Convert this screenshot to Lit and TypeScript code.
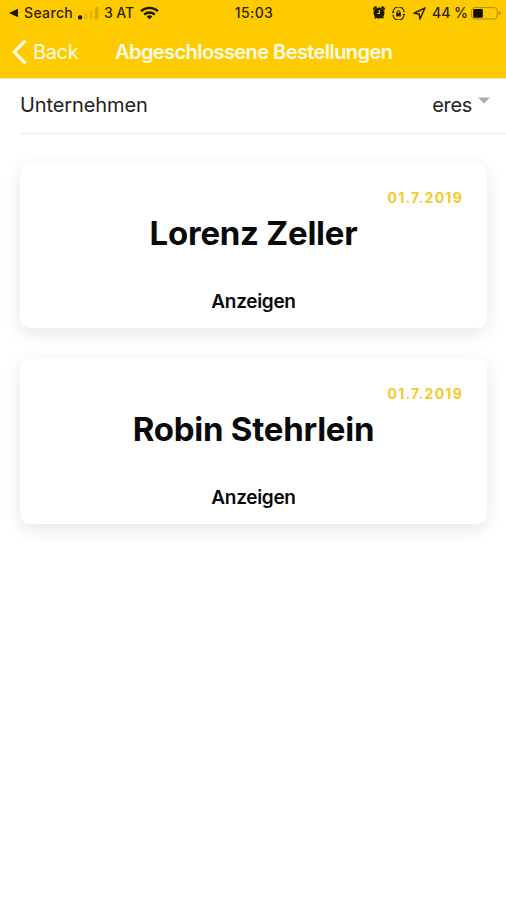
import { LitElement, html, css } from "lit";
import { customElement, property } from "lit/decorators.js";

@customElement("status-bar")
class StatusBar extends LitElement {
  static styles = css`
    :host {
      display: grid;
      grid-template-columns: 1fr auto 1fr;
      align-items: center;
      height: 26px;
      padding: 0 5px 0 9px;
      color: #2b2406;
      font-size: 14px;
      font-weight: 500;
      line-height: 26px;
      white-space: pre;
    }
    .side { display: flex; align-items: center; }
    .right { justify-content: flex-end; }
    svg { display: block; flex: none; }
    .back { margin-right: 5px; }
    .search { width: 49px; letter-spacing: 0.35px; }
    .bars { margin: 1px 5px 0 5px; }
    .carrier { width: 31px; letter-spacing: -0.1px; }
    .wifi { margin-left: 5px; }
    .time { letter-spacing: 0.4px; margin-right: 2px; }
    .alarm { margin-right: 7px; }
    .lock { margin-right: 8px; }
    .arrow { margin-right: 6px; }
    .percent { width: 36px; letter-spacing: 0; margin-right: 3px; }
  `;
  render() {
    return html`
      <div class="side">
        <svg class="back" width="10" height="10" viewBox="0 0 10 10"><path d="M0 5 9 .7v8.6z" fill="#1c1803" /></svg>
        <span class="search">Search</span>
        <svg class="bars" width="21" height="13" viewBox="0 0 21 13">
          <rect x="0" y="8.3" width="4.2" height="4.2" rx="1.6" fill="#1c1803" />
          <rect x="6.3" y="6.5" width="3" height="6" rx="1" fill="#e6b800" />
          <rect x="11.5" y="3.5" width="3" height="9" rx="1" fill="#e6b800" />
          <rect x="17" y="0" width="3.4" height="12.5" rx="1" fill="#d6a900" />
        </svg>
        <span class="carrier">3 AT</span>
        <svg class="wifi" width="19" height="14" viewBox="0 0 19 14" fill="none" stroke="#1c1803" stroke-width="2.3">
          <path d="M1 5.2a12.3 12.3 0 0 1 17 0" />
          <path d="M4.2 8.6a7.8 7.8 0 0 1 10.6 0" />
          <path d="M9.5 13.3 6.7 10.5a4 4 0 0 1 5.6 0z" fill="#1c1803" stroke="none" />
        </svg>
      </div>
      <span class="time">15:03</span>
      <div class="side right">
        <svg class="alarm" width="12" height="14" viewBox="0 0 12 14">
          <circle cx="6" cy="7" r="5.5" fill="#1c1803" />
          <path d="M.5 4.4A2.6 2.6 0 0 1 4.2.9zM11.5 4.4A2.6 2.6 0 0 0 7.8.9zM1.4 10.5h2.4l-2 2.8zM10.6 10.5H8.2l2 2.8z" fill="#1c1803" />
          <path d="M6.3 4v3.5H4" fill="none" stroke="#fecb00" stroke-width="1.1" />
        </svg>
        <svg class="lock" width="13" height="13" viewBox="0 0 13 13" fill="none" stroke="#2b2406" stroke-width="1.2">
          <path d="M1 5.3A5.4 5.4 0 0 1 12 5.3M12 7.7A5.4 5.4 0 0 1 1 7.7" />
          <path d="M0 4.8 1 6l1.2-1M10.8 8 12 7l1 1.2" stroke-width="1" />
          <rect x="4.1" y="5.8" width="4.8" height="3.6" fill="#2b2406" stroke="none" />
          <path d="M5.1 6.2V5a1.4 1.4 0 0 1 2.8 0v1.2" stroke-width="1" />
        </svg>
        <svg class="arrow" width="13" height="13" viewBox="0 0 13 13"><path d="M12 1 1 6.2l5.2.7.7 5.2z" fill="none" stroke="#2b2406" stroke-width="1.5" stroke-linejoin="round" /></svg>
        <span class="percent">44 %</span>
        <svg width="30" height="13" viewBox="0 0 30 13">
          <rect x=".6" y=".6" width="25.6" height="11.4" rx="3" fill="none" stroke="#b08e00" stroke-width="1" />
          <rect x="2.2" y="2" width="9.6" height="8.8" rx="1" fill="#110e02" />
          <path d="M27.6 4.3q2 .6 2 2t-2 2z" fill="#b08e00" />
        </svg>
      </div>
    `;
  }
}

@customElement("nav-header")
class NavHeader extends LitElement {
  static styles = css`
    :host {
      display: flex;
      align-items: center;
      height: 52px;
      padding-left: 12px;
      color: #fffbe8;
      font-size: 20px;
      line-height: 52px;
      white-space: nowrap;
    }
    svg { display: block; margin-right: 6px; }
    .back { width: 82px; letter-spacing: -0.35px; }
    .title { font-weight: 600; letter-spacing: -0.57px; }
  `;
  render() {
    return html`
      <svg width="15" height="26" viewBox="0 0 15 26"><path d="M13.5 1.6 2.3 13l11.2 11.4" fill="none" stroke="#fffbe8" stroke-width="3.2" /></svg>
      <span class="back">Back</span>
      <span class="title">Abgeschlossene Bestellungen</span>
    `;
  }
}

@customElement("order-card")
class OrderCard extends LitElement {
  @property() name = "";
  @property() date = "";
  static styles = css`
    :host {
      display: flex;
      flex-direction: column;
      height: 165px;
      box-sizing: border-box;
      padding-top: 25px;
      border-radius: 10px;
      background: #fff;
      box-shadow: 0 5px 18px rgba(0, 0, 0, 0.1);
      text-align: center;
      color: #0a0a0a;
    }
    .date {
      align-self: flex-end;
      margin-right: 24px;
      height: 19px;
      line-height: 19px;
      font-size: 14px;
      font-weight: 700;
      letter-spacing: 1.25px;
      color: #f2cb2c;
    }
    .name {
      height: 52px;
      line-height: 52px;
      font-size: 33px;
      font-weight: 650;
      letter-spacing: -0.25px;
    }
    .show {
      margin-top: 30px;
      height: 26px;
      line-height: 26px;
      font-size: 19px;
      font-weight: 600;
      letter-spacing: -0.3px;
    }
  `;
  render() {
    return html`
      <div class="date">${this.date}</div>
      <div class="name">${this.name}</div>
      <div class="show">Anzeigen</div>
    `;
  }
}

@customElement("app-root")
class AppRoot extends LitElement {
  static styles = css`
    :host {
      display: block;
      height: 900px;
      overflow: hidden;
      background: #fff;
      font-family: Inter, "Liberation Sans", sans-serif;
    }
    .top { background: #fecb00; border-bottom: 1px solid #faeab0; }
    .field {
      display: flex;
      align-items: center;
      height: 55px;
      box-sizing: border-box;
      margin-left: 20px;
      padding: 0 16px 2px 0;
      border-bottom: 1px solid #ebebeb;
      font-size: 20px;
      line-height: 52px;
      color: #222;
    }
    .label { flex: 1; letter-spacing: -0.1px; }
    .value { letter-spacing: -0.3px; }
    .caret { margin: 0 0 9px 6px; }
    .list {
      display: flex;
      flex-direction: column;
      gap: 31px;
      padding: 29px 19px 0 20px;
    }
  `;
  render() {
    return html`
      <div class="top">
        <status-bar></status-bar>
        <nav-header></nav-header>
      </div>
      <div class="field">
        <span class="label">Unternehmen</span>
        <span class="value">eres</span>
        <svg class="caret" width="12" height="7" viewBox="0 0 12 7"><path d="M0 .5h12L6 6.5z" fill="#aaa" /></svg>
      </div>
      <div class="list">
        <order-card name="Lorenz Zeller" date="01.7.2019"></order-card>
        <order-card name="Robin Stehrlein" date="01.7.2019"></order-card>
      </div>
    `;
  }
}
